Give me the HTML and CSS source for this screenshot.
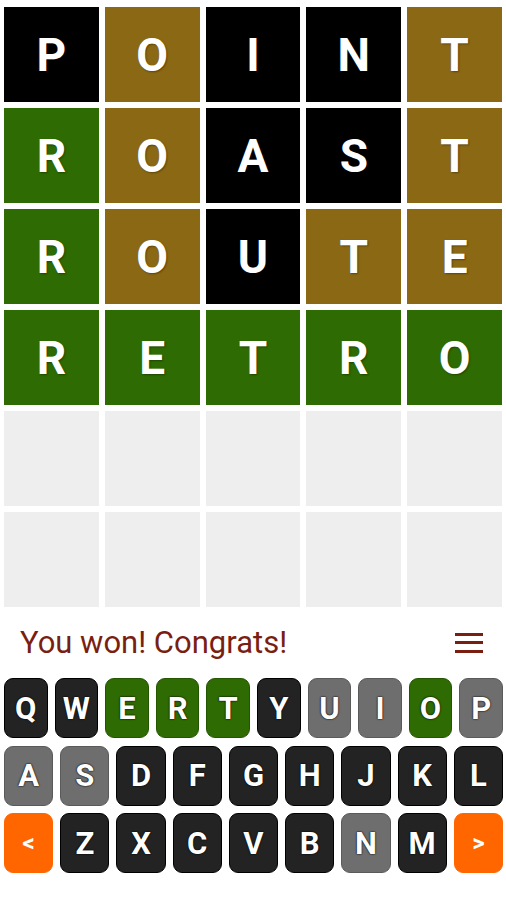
FILE: index.html
```html
<!DOCTYPE html>
<html lang="en">
<head>
  <meta charset="UTF-8" />
  <meta name="viewport" content="width=device-width, initial-scale=1.0" />
  <title>Wordle</title>
  <link rel="stylesheet" href="styles.css">
</head>
<body>
  <div id="board">
    <div class="tile absent">P</div>
    <div class="tile present">O</div>
    <div class="tile absent">I</div>
    <div class="tile absent">N</div>
    <div class="tile present">T</div>

    <div class="tile correct">R</div>
    <div class="tile present">O</div>
    <div class="tile absent">A</div>
    <div class="tile absent">S</div>
    <div class="tile present">T</div>

    <div class="tile correct">R</div>
    <div class="tile present">O</div>
    <div class="tile absent">U</div>
    <div class="tile present">T</div>
    <div class="tile present">E</div>

    <div class="tile correct">R</div>
    <div class="tile correct">E</div>
    <div class="tile correct">T</div>
    <div class="tile correct">R</div>
    <div class="tile correct">O</div>

    <div class="tile"></div>
    <div class="tile"></div>
    <div class="tile"></div>
    <div class="tile"></div>
    <div class="tile"></div>

    <div class="tile"></div>
    <div class="tile"></div>
    <div class="tile"></div>
    <div class="tile"></div>
    <div class="tile"></div>
  </div>

  <div id="message-bar">
    <p id="message">You won! Congrats!</p>
    <button id="menu" aria-label="Menu">
      <span></span><span></span><span></span>
    </button>
  </div>

  <div id="keyboard">
    <div class="key-row">
      <button class="key">Q</button>
      <button class="key">W</button>
      <button class="key correct">E</button>
      <button class="key correct">R</button>
      <button class="key correct">T</button>
      <button class="key">Y</button>
      <button class="key used">U</button>
      <button class="key used">I</button>
      <button class="key correct">O</button>
      <button class="key used">P</button>
    </div>
    <div class="key-row">
      <button class="key used">A</button>
      <button class="key used">S</button>
      <button class="key">D</button>
      <button class="key">F</button>
      <button class="key">G</button>
      <button class="key">H</button>
      <button class="key">J</button>
      <button class="key">K</button>
      <button class="key">L</button>
    </div>
    <div class="key-row">
      <button class="key action">&lt;</button>
      <button class="key">Z</button>
      <button class="key">X</button>
      <button class="key">C</button>
      <button class="key">V</button>
      <button class="key">B</button>
      <button class="key used">N</button>
      <button class="key">M</button>
      <button class="key action">&gt;</button>
    </div>
  </div>
</body>
</html>
```

FILE: styles.css
```css
* {
  margin: 0;
  padding: 0;
  box-sizing: border-box;
}

body {
  font-family: Roboto, "Liberation Sans", sans-serif;
  background: #fff;
  width: 506px;
  height: 900px;
  overflow: hidden;
}

#board {
  display: grid;
  grid-template-columns: repeat(5, 1fr);
  grid-auto-rows: 95px;
  gap: 6px;
  padding: 7px 4px 0 4px;
}

.tile {
  display: flex;
  justify-content: center;
  align-items: center;
  background: #eeeeee;
  color: #fff;
  font-size: 46px;
  font-weight: 700;
  text-shadow: 1px 1px 2px rgba(0, 0, 0, 0.35);
}

.tile.absent {
  background: #000;
}

.tile.present {
  background: #8b6914;
}

.tile.correct {
  background: #2e6b02;
}

#message-bar {
  display: flex;
  align-items: center;
  justify-content: space-between;
  height: 71px;
  padding: 0 23px 0 20px;
}

#message {
  font-size: 31px;
  color: #7a1e12;
}

#menu {
  display: flex;
  flex-direction: column;
  gap: 5.5px;
  width: 28px;
  border: none;
  background: none;
}

#menu span {
  display: block;
  height: 3px;
  background: #7a1e12;
}

#keyboard {
  display: flex;
  flex-direction: column;
  gap: 7.5px;
  padding: 0 3px 0 4px;
}

.key-row {
  display: flex;
  gap: 7px;
}

.key {
  flex: 1;
  height: 60px;
  border: 1.5px solid #000;
  border-radius: 9px;
  background: #232323;
  color: #fff;
  font-family: Roboto, "Liberation Sans", sans-serif;
  font-size: 31px;
  font-weight: 700;
  text-shadow: 0 0 2px #000, 0 0 1px #000;
}

.key.used {
  background: #6e6e6e;
  border-color: #5a5a5a;
}

.key.correct {
  background: #2e6b02;
  border-color: #245600;
}

.key.action {
  background: #ff6600;
  border-color: #ff6600;
  font-size: 24px;
  text-shadow: none;
}
```
